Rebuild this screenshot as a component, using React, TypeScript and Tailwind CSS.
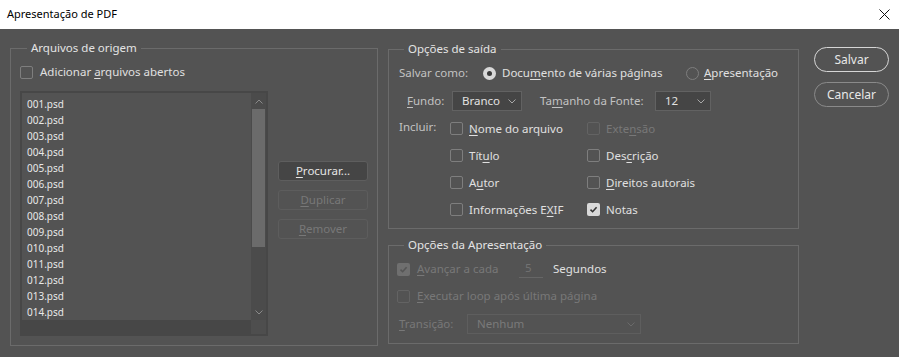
import type { ReactNode } from 'react';

const FONT = { fontFamily: '"Noto Sans", "Open Sans", sans-serif' };

function U({ children }: { children: ReactNode }) {
    return <span className="underline underline-offset-2">{children}</span>;
}

function CheckMark({ color }: { color: string }) {
    return (
        <svg width="9" height="9" viewBox="0 0 9 9" fill="none">
            <path d="M1.5 4.6 L3.6 6.7 L7.6 2.2" stroke={color} strokeWidth="1.6" />
        </svg>
    );
}

function Checkbox({ checked = false, disabled = false }: { checked?: boolean; disabled?: boolean }) {
    if (checked) {
        return (
            <span
                className={`flex h-[13px] w-[13px] shrink-0 items-center justify-center rounded-[2px] ${
                    disabled ? 'bg-[#6f6f6f]' : 'bg-[#d9d9d9]'
                }`}
            >
                <CheckMark color={disabled ? '#555555' : '#333333'} />
            </span>
        );
    }
    return (
        <span
            className={`h-[13px] w-[13px] shrink-0 rounded-[2px] border ${
                disabled ? 'border-[#636363]' : 'border-[#7e7e7e]'
            }`}
        />
    );
}

function Radio({ checked = false }: { checked?: boolean }) {
    if (checked) {
        return (
            <span className="flex h-[13px] w-[13px] shrink-0 items-center justify-center rounded-full bg-[#d9d9d9]">
                <span className="h-[5px] w-[5px] rounded-full bg-[#3a3a3a]" />
            </span>
        );
    }
    return <span className="h-[13px] w-[13px] shrink-0 rounded-full border border-[#7e7e7e]" />;
}

function Chevron({ color = '#a8a8a8' }: { color?: string }) {
    return (
        <svg width="8" height="5" viewBox="0 0 8 5" fill="none">
            <path d="M0.5 0.5 L4 4 L7.5 0.5" stroke={color} strokeWidth="1" />
        </svg>
    );
}

function Select({ value, width, disabled = false }: { value: string; width: string; disabled?: boolean }) {
    return (
        <div
            className={`flex h-[20px] items-center justify-between border pl-[9px] pr-[5px] ${width} ${
                disabled ? 'border-[#5e5e5e] text-[#7a7a7a]' : 'border-[#626262] bg-[#454545] text-[#e2e2e2]'
            }`}
        >
            <span>{value}</span>
            <Chevron color={disabled ? '#6a6a6a' : '#a8a8a8'} />
        </div>
    );
}

function Check({ label, checked, disabled }: { label: ReactNode; checked?: boolean; disabled?: boolean }) {
    return (
        <div className={`flex h-[17px] items-center gap-[6px] ${disabled ? 'text-[#787878]' : 'text-[#e0e0e0]'}`}>
            <Checkbox checked={checked} disabled={disabled} />
            <span>{label}</span>
        </div>
    );
}

function SideButton({ children, primary = false }: { children: ReactNode; primary?: boolean }) {
    return (
        <div
            className={`flex h-[20px] w-[90px] items-center justify-center rounded-[3px] border ${
                primary ? 'border-[#5e5e5e] bg-[#454545] text-[#e6e6e6]' : 'border-[#5d5d5d] text-[#787878]'
            }`}
        >
            {children}
        </div>
    );
}

const FILES = Array.from({ length: 14 }, (_, i) => `${String(i + 1).padStart(3, '0')}.psd`);

export default function App() {
    return (
        <div className="flex h-[357px] w-[899px] flex-col bg-[#535353] text-[11.5px]" style={FONT}>
            {/* title bar */}
            <div className="flex h-[29px] items-center justify-between bg-white pl-[7px] pr-[9px] text-[11px] text-black">
                <span>Apresentação de PDF</span>
                <svg width="11" height="11" viewBox="0 0 11 11" fill="none">
                    <path d="M0.5 0.5 L10.5 10.5 M10.5 0.5 L0.5 10.5" stroke="#111" strokeWidth="1" />
                </svg>
            </div>

            <div className="flex px-[10px]">
                {/* Arquivos de origem */}
                <fieldset className="mt-[11px] h-[306px] w-[368px] border border-[#6b6b6b] pl-[9px] pr-[9px]">
                    <legend className="ml-[7px] px-[4px] leading-[16px] text-[#e4e4e4]">Arquivos de origem</legend>
                    <div className="mt-[8px] flex h-[16px] items-center gap-[7px] text-[#e0e0e0]">
                        <Checkbox />
                        <span>
                            Adicionar <U>a</U>rquivos abertos
                        </span>
                    </div>
                    <div className="mt-[11px] flex gap-[10px]">
                        <div className="flex h-[245px] w-[248px] flex-col border-2 border-[#474747]">
                            <div className="flex flex-1">
                                <div className="flex-1 pt-[3px] pl-[5px] text-[10px] text-[#e8e8e8]">
                                    {FILES.map((f) => (
                                        <div key={f} className="h-[16px] leading-[16px]">
                                            {f}
                                        </div>
                                    ))}
                                </div>
                                <div className="flex w-[15px] flex-col items-center bg-[#4b4b4b]">
                                    <div className="flex h-[16px] items-center">
                                        <svg width="8" height="5" viewBox="0 0 8 5" fill="none">
                                            <path d="M0.5 4.5 L4 1 L7.5 4.5" stroke="#8a8a8a" strokeWidth="1" />
                                        </svg>
                                    </div>
                                    <div className="h-[138px] w-[13px] bg-[#6b6b6b]" />
                                    <div className="flex-1" />
                                    <div className="flex h-[16px] items-center">
                                        <Chevron color="#8a8a8a" />
                                    </div>
                                </div>
                            </div>
                            <div className="flex h-[15px]">
                                <div className="flex-1 bg-[#474747]" />
                                <div className="w-[15px] bg-[#4e4e4e]" />
                            </div>
                        </div>
                        <div className="mt-[70px] flex flex-col gap-[9px]">
                            <SideButton primary>
                                <span>
                                    <U>P</U>rocurar...
                                </span>
                            </SideButton>
                            <SideButton>
                                <span>
                                    <U>D</U>uplicar
                                </span>
                            </SideButton>
                            <SideButton>
                                <span>
                                    <U>R</U>emover
                                </span>
                            </SideButton>
                        </div>
                    </div>
                </fieldset>

                {/* right column */}
                <div className="ml-[10px] flex w-[412px] flex-col">
                    <fieldset className="mt-[12px] h-[188px] border border-[#6b6b6b] pl-[10px]">
                        <legend className="ml-[5px] px-[4px] leading-[16px] text-[#e4e4e4]">Opções de saída</legend>
                        <div className="mt-[6px] flex h-[20px] items-center">
                            <span className="w-[84px] text-[#c2c2c2]">Salvar como:</span>
                            <div className="flex w-[203px] items-center gap-[6px] text-[#e0e0e0]">
                                <Radio checked />
                                <span>
                                    Docu<U>m</U>ento de várias páginas
                                </span>
                            </div>
                            <div className="flex items-center gap-[5px] text-[#e0e0e0]">
                                <Radio />
                                <span>
                                    <U>A</U>presentação
                                </span>
                            </div>
                        </div>
                        <div className="mt-[8px] flex h-[20px] items-center pl-[8px]">
                            <span className="w-[45px] text-[#c2c2c2]">
                                <U>F</U>undo:
                            </span>
                            <Select value="Branco" width="w-[70px]" />
                            <span className="ml-[18px] w-[115px] text-[#c2c2c2]">
                                Ta<U>m</U>anho da Fonte:
                            </span>
                            <Select value="12" width="w-[56px]" />
                        </div>
                        <div className="mt-[8px] flex">
                            <span className="w-[51px] leading-[16px] text-[#c2c2c2]">Incluir:</span>
                            <div className="grid grid-cols-[137px_1fr] gap-y-[10px] pt-[1px]">
                                <Check label={<><U>N</U>ome do arquivo</>} />
                                <Check label={<>Exte<U>n</U>são</>} disabled />
                                <Check label={<>Tít<U>u</U>lo</>} />
                                <Check label={<>Des<U>c</U>rição</>} />
                                <Check label={<>A<U>u</U>tor</>} />
                                <Check label={<><U>D</U>ireitos autorais</>} />
                                <Check label={<>Informações E<U>X</U>IF</>} />
                                <Check label="Notas" checked />
                            </div>
                        </div>
                    </fieldset>

                    <fieldset className="mt-[8px] h-[107px] border border-[#6b6b6b] pl-[8px]">
                        <legend className="ml-[7px] px-[4px] leading-[16px] text-[#e4e4e4]">Opções da Apresentação</legend>
                        <div className="mt-[6px] flex h-[20px] items-center">
                            <div className="flex w-[122px] items-center gap-[7px] text-[#787878]">
                                <Checkbox checked disabled />
                                <span>
                                    <U>A</U>vançar a cada
                                </span>
                            </div>
                            <div className="h-[18px] w-[24px] border-b border-[#666] pl-[6px] leading-[16px] text-[#727272]">
                                5
                            </div>
                            <span className="ml-[10px] text-[#e0e0e0]">Segundos</span>
                        </div>
                        <div className="mt-[7px] flex h-[20px] items-center gap-[7px] text-[#787878]">
                            <Checkbox disabled />
                            <span>
                                <U>E</U>xecutar loop após última página
                            </span>
                        </div>
                        <div className="mt-[8px] flex h-[20px] items-center pl-[2px]">
                            <span className="w-[68px] text-[#787878]">
                                <U>T</U>ransição:
                            </span>
                            <Select value="Nenhum" width="w-[174px]" disabled />
                        </div>
                    </fieldset>
                </div>

                {/* action buttons */}
                <div className="ml-[15px] mt-[18px] flex flex-col gap-[10px]">
                    <div className="flex h-[25px] w-[75px] items-center justify-center rounded-full border-[1.5px] border-[#d6d6d6] text-[12px] text-[#e8e8e8]">
                        Salvar
                    </div>
                    <div className="flex h-[25px] w-[75px] items-center justify-center rounded-full border border-[#8a8a8a] text-[12px] text-[#e8e8e8]">
                        Cancelar
                    </div>
                </div>
            </div>
        </div>
    );
}
